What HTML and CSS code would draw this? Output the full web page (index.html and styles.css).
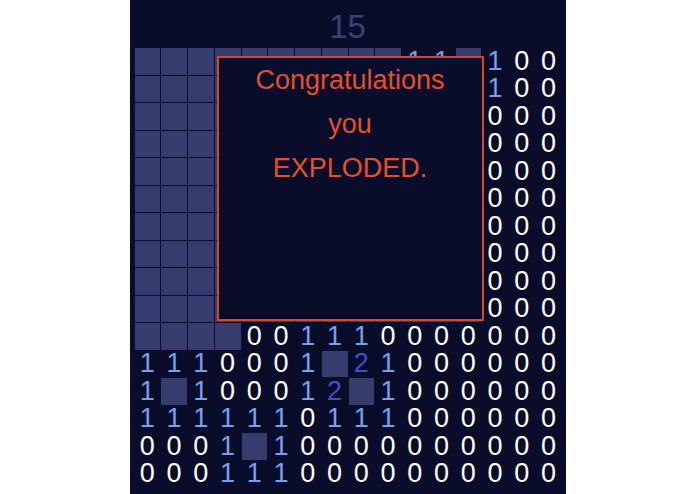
FILE: index.html
```html
<!DOCTYPE html>
<html>
<head>
<meta charset="utf-8">
<link rel="stylesheet" href="styles.css">
</head>
<body>
<div class="panel">
  <div class="header">15</div>
  <div class="board">
    <div class="c"></div><div class="c"></div><div class="c"></div><div class="c"></div><div class="c"></div><div class="c"></div><div class="c"></div><div class="c"></div><div class="c"></div><div class="c"></div><div class="n1">1</div><div class="n1">1</div><div class="c"></div><div class="n1">1</div><div class="n0">0</div><div class="n0">0</div>
    <div class="c"></div><div class="c"></div><div class="c"></div><div class="c"></div><div class="c"></div><div class="c"></div><div class="c"></div><div class="c"></div><div class="c"></div><div class="c"></div><div class="c"></div><div class="c"></div><div class="c"></div><div class="n1">1</div><div class="n0">0</div><div class="n0">0</div>
    <div class="c"></div><div class="c"></div><div class="c"></div><div class="c"></div><div class="c"></div><div class="c"></div><div class="c"></div><div class="c"></div><div class="c"></div><div class="c"></div><div class="c"></div><div class="c"></div><div class="c"></div><div class="n0">0</div><div class="n0">0</div><div class="n0">0</div>
    <div class="c"></div><div class="c"></div><div class="c"></div><div class="c"></div><div class="c"></div><div class="c"></div><div class="c"></div><div class="c"></div><div class="c"></div><div class="c"></div><div class="c"></div><div class="c"></div><div class="c"></div><div class="n0">0</div><div class="n0">0</div><div class="n0">0</div>
    <div class="c"></div><div class="c"></div><div class="c"></div><div class="c"></div><div class="c"></div><div class="c"></div><div class="c"></div><div class="c"></div><div class="c"></div><div class="c"></div><div class="c"></div><div class="c"></div><div class="c"></div><div class="n0">0</div><div class="n0">0</div><div class="n0">0</div>
    <div class="c"></div><div class="c"></div><div class="c"></div><div class="c"></div><div class="c"></div><div class="c"></div><div class="c"></div><div class="c"></div><div class="c"></div><div class="c"></div><div class="c"></div><div class="c"></div><div class="c"></div><div class="n0">0</div><div class="n0">0</div><div class="n0">0</div>
    <div class="c"></div><div class="c"></div><div class="c"></div><div class="c"></div><div class="c"></div><div class="c"></div><div class="c"></div><div class="c"></div><div class="c"></div><div class="c"></div><div class="c"></div><div class="c"></div><div class="c"></div><div class="n0">0</div><div class="n0">0</div><div class="n0">0</div>
    <div class="c"></div><div class="c"></div><div class="c"></div><div class="c"></div><div class="c"></div><div class="c"></div><div class="c"></div><div class="c"></div><div class="c"></div><div class="c"></div><div class="c"></div><div class="c"></div><div class="c"></div><div class="n0">0</div><div class="n0">0</div><div class="n0">0</div>
    <div class="c"></div><div class="c"></div><div class="c"></div><div class="c"></div><div class="c"></div><div class="c"></div><div class="c"></div><div class="c"></div><div class="c"></div><div class="c"></div><div class="c"></div><div class="c"></div><div class="c"></div><div class="n0">0</div><div class="n0">0</div><div class="n0">0</div>
    <div class="c"></div><div class="c"></div><div class="c"></div><div class="c"></div><div class="c"></div><div class="c"></div><div class="c"></div><div class="c"></div><div class="c"></div><div class="c"></div><div class="c"></div><div class="c"></div><div class="c"></div><div class="n0">0</div><div class="n0">0</div><div class="n0">0</div>
    <div class="c"></div><div class="c"></div><div class="c"></div><div class="c"></div><div class="n0">0</div><div class="n0">0</div><div class="n1">1</div><div class="n1">1</div><div class="n1">1</div><div class="n0">0</div><div class="n0">0</div><div class="n0">0</div><div class="n0">0</div><div class="n0">0</div><div class="n0">0</div><div class="n0">0</div>
    <div class="n1">1</div><div class="n1">1</div><div class="n1">1</div><div class="n0">0</div><div class="n0">0</div><div class="n0">0</div><div class="n1">1</div><div class="c"></div><div class="n2">2</div><div class="n1">1</div><div class="n0">0</div><div class="n0">0</div><div class="n0">0</div><div class="n0">0</div><div class="n0">0</div><div class="n0">0</div>
    <div class="n1">1</div><div class="c"></div><div class="n1">1</div><div class="n0">0</div><div class="n0">0</div><div class="n0">0</div><div class="n1">1</div><div class="n2">2</div><div class="c"></div><div class="n1">1</div><div class="n0">0</div><div class="n0">0</div><div class="n0">0</div><div class="n0">0</div><div class="n0">0</div><div class="n0">0</div>
    <div class="n1">1</div><div class="n1">1</div><div class="n1">1</div><div class="n1">1</div><div class="n1">1</div><div class="n1">1</div><div class="n0">0</div><div class="n1">1</div><div class="n1">1</div><div class="n1">1</div><div class="n0">0</div><div class="n0">0</div><div class="n0">0</div><div class="n0">0</div><div class="n0">0</div><div class="n0">0</div>
    <div class="n0">0</div><div class="n0">0</div><div class="n0">0</div><div class="n1">1</div><div class="c"></div><div class="n1">1</div><div class="n0">0</div><div class="n0">0</div><div class="n0">0</div><div class="n0">0</div><div class="n0">0</div><div class="n0">0</div><div class="n0">0</div><div class="n0">0</div><div class="n0">0</div><div class="n0">0</div>
    <div class="n0">0</div><div class="n0">0</div><div class="n0">0</div><div class="n1">1</div><div class="n1">1</div><div class="n1">1</div><div class="n0">0</div><div class="n0">0</div><div class="n0">0</div><div class="n0">0</div><div class="n0">0</div><div class="n0">0</div><div class="n0">0</div><div class="n0">0</div><div class="n0">0</div><div class="n0">0</div>
  </div>
  <div class="modal">
    <p>Congratulations</p>
    <p>you</p>
    <p>EXPLODED.</p>
  </div>
</div>
</body>
</html>
```

FILE: styles.css
```css
html, body {
  margin: 0;
  padding: 0;
  background: #ffffff;
}
body {
  font-family: "Liberation Sans", Arial, sans-serif;
}
.panel {
  position: relative;
  width: 436px;
  height: 494px;
  margin: 0 auto;
  background: #0a0d29;
  box-sizing: border-box;
  padding-left: 5px;
}
.header {
  height: 48px;
  line-height: 54px;
  text-align: center;
  font-size: 33px;
  color: #3a4173;
  padding-right: 5px;
}
.board {
  width: 427px;
  display: grid;
  grid-template-columns: repeat(16, 1fr);
  grid-template-rows: repeat(16, 26.5px);
  column-gap: 1px;
  row-gap: 1px;
}
.board > div {
  display: flex;
  align-items: center;
  justify-content: center;
  font-size: 27px;
  line-height: 1;
}
.board > .c {
  background: #363c6d;
}
.n0 { color: #ffffff; }
.n1 { color: #77a0f0; }
.n2 { color: #3d50d6; }
.modal {
  position: absolute;
  left: 87px;
  top: 56px;
  width: 267px;
  height: 265px;
  box-sizing: border-box;
  border: 2px solid #d6472c;
  background: #0a0d29;
  text-align: center;
  color: #e2512f;
  font-size: 27px;
}
.modal p {
  margin: 0;
  line-height: 44px;
}
```
